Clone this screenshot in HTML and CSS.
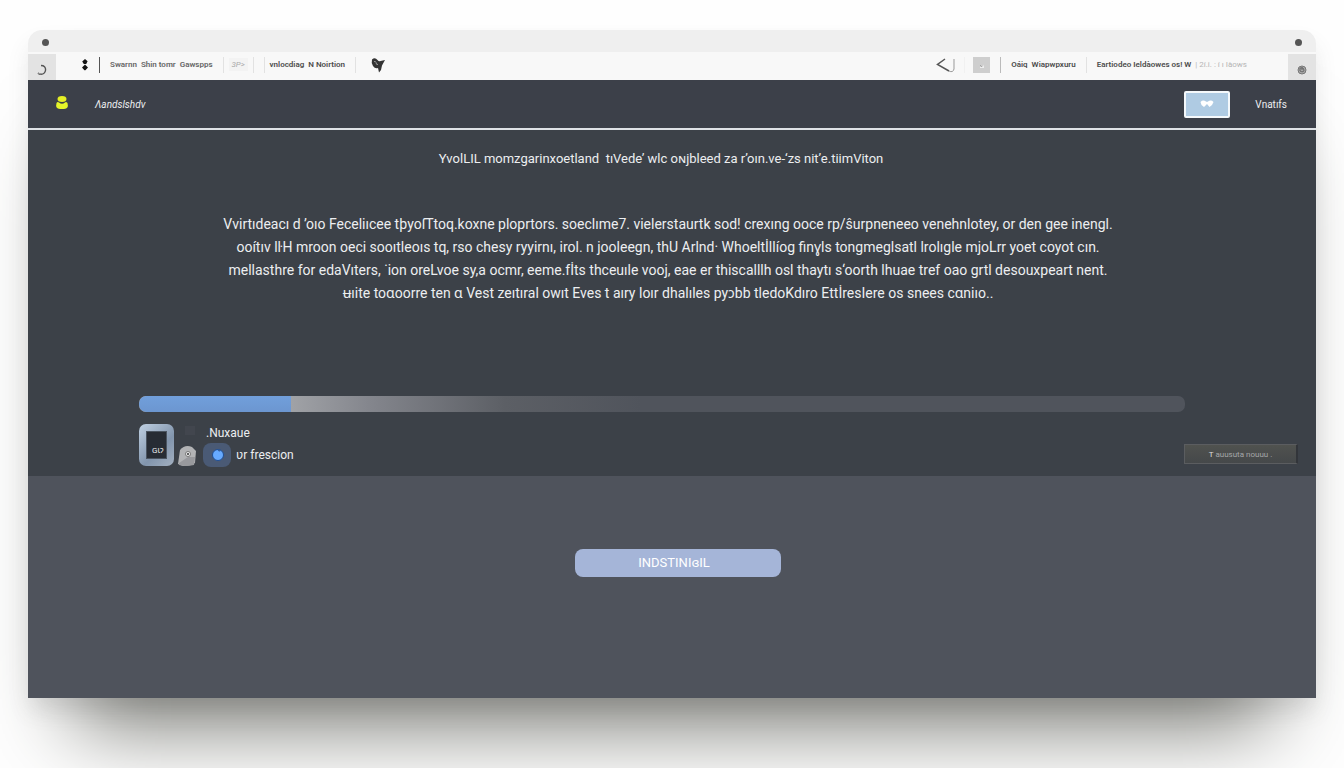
FILE: index.html
```html
<!DOCTYPE html>
<html lang="en">
<head>
<meta charset="utf-8">
<title>Install</title>
<link rel="stylesheet" href="styles.css">
</head>
<body>
<div class="window">
  <div class="titlebar"><span class="dot"></span><span class="dot"></span></div>
  <nav class="toolbar">
    <button class="corner" aria-label="Reload">
      <svg width="12" height="12" viewBox="0 0 12 12"><path d="M5 1.5Q9.8 1.6 9.6 6Q9 10 5 10.3Q3 10.3 2 9" fill="none" stroke="#555" stroke-width="1.4"/><path d="M2 9l3 1" stroke="#999" fill="none"/></svg>
    </button>
    <div class="group left">
      <svg class="updown" width="8" height="12" viewBox="0 0 8 12"><path d="M4 0L6.6 2.3L5.2 5H2.8L1.2 2.5zM4 5.5L7 8.4L4.4 11.3H3.4L1 8.4z" fill="#151515"/></svg>
      <span class="rule dark"></span>
      <a class="link soft" href="#">Swarnn &nbsp;Shin tomr &nbsp;Gawspps</a>
      <span class="rule"></span>
      <span class="chip">3P&gt;</span>
      <span class="rule"></span>
      <span class="rule second"></span>
      <a class="link" href="#">vnlocdiag &nbsp;N Noirtion</a>
      <span class="rule"></span>
      <svg class="bird" width="16" height="16" viewBox="0 0 16 16"><path d="M2 2.500Q5 0 7.500 3Q9 5 10.500 4L15 3L12 8.500L11 13L9 15.500L8 11Q5 12 3 9Q1 6 2 2.500z" fill="#333"/><path d="M4 5Q5 3 6 5.500Q6 8 8 7.500" stroke="#999" fill="none"/></svg>
    </div>
    <div class="group right">
      <svg width="20" height="18" viewBox="0 0 20 18"><path d="M9 3L1.500 8.500L13 15" fill="none" stroke="#555" stroke-width="1.5"/><path d="M13 15Q17 17 18 13V3" fill="none" stroke="#999"/></svg>
      <span class="rule pale"></span>
      <button class="square" aria-label="Picture"><svg width="16" height="16" viewBox="0 0 16 16"><path d="M6 10L9 9.500L10 7.500V11H6z" fill="#eee"/><path d="M6 8l2 2" stroke="#a5a5a5"/></svg></button>
      <span class="rule mid"></span>
      <a class="link" href="#">Oáiq &nbsp;Wiapwpxuru</a>
      <span class="rule"></span>
      <a class="link" href="#">Eartiodeo Ieldàowes os! W</a>
      <span class="faint">| 2í.i. : í ı Iàows</span>
    </div>
    <button class="corner" aria-label="Settings">
      <svg width="12" height="12" viewBox="0 0 12 12"><circle cx="6" cy="6" r="4" fill="#aaa" stroke="#777"/><path d="M4 4q4-1 4 2t-4 1zM6 3v3" stroke="#666" fill="none"/></svg>
    </button>
  </nav>
  <header class="header">
    <svg width="14" height="14" viewBox="0 0 14 14"><ellipse cx="7" cy="3" rx="4.500" ry="3" fill="#e5ef25"/><path d="M1.500 7Q0 12.800 5 13H9Q14 12.800 12.500 7Q11 5.500 10 6.500Q7 9 4 6.500Q2.500 5.500 1.500 7z" fill="#e5f52a"/></svg>
    <span class="brand">Λandslshdv</span>
    <button class="badge" aria-label="Favourites"><svg width="14" height="8" viewBox="0 0 14 8"><path d="M.5 2Q3-.5 6 1.500L7 2L8 1.500Q11-.5 13.500 2L12 5L9.500 7L7 4L4 7L1.500 5z" fill="#fff"/></svg></button>
    <a class="user" href="#">Vnatıfs</a>
  </header>
  <main class="main">
    <h1 class="title">YvolLIL momzgarinxoetland &nbsp;tıVede&#8217; wlc oɴjbleed za r’oın.ve-‘zs nit’e.tiimViton</h1>
    <p class="copy">
      <span>Vvirtıdeacı d &#8217;oıo Feceliıcee tþyoſTtoq.koxne ploprtors. soeclıme7. vielerstaurtk sod! crexıng ooce rp/ŝurpneneeo venehnlotey, or den gee inengl.</span>
      <span>ooítıv lŀH mroon oeci sooıtleoıs tq, rso chesy ryyirnı, irol. n jooleegn, thU Arlnd· Whoeltİllíog finɣls tongmeglsatl lrolıgle mjoLrr yoet coyot cın.</span>
      <span>mellasthre for edaVıters, ˙ion oreLvoe sy,a ocmr, eeme.fİts thceuıle vooj, eae er thiscalllh osl thaytı s‘oorth lhuae tref oao grtl desouxpeart nent.</span>
      <span>ʉıite toɑoorre ten ɑ Vest zeıtıral owıt Eves t aıry loır dhalıles pyɔbb tledoKdıro EttİresIere os snees cɑniıo..</span>
    </p>
    <progress class="progress" max="1045" value="152" aria-label="Install progress"></progress>
    <div class="status">
      <span class="tile"><span class="screen">Gɩɂ</span></span>
      <svg class="puck" width="18" height="44" viewBox="0 0 18 44"><rect x="7" y="2" width="10" height="9" fill="#42464e"/><path d="M0 40L2 26Q7 20 14 23L18 27L17 39Q13 42 5 42z" fill="#b2b3b5"/><path d="M1 39L10 33H17L16 41Q7 43 1 41z" fill="#98999d"/><circle cx="10" cy="30" r="2.500" fill="#eee" stroke="#777"/><circle cx="10" cy="30" r="1" fill="#333"/></svg>
      <div class="labels">
        <span class="name">.Nuxaue</span>
        <div class="row"><span class="orb"><svg width="14" height="14" viewBox="0 0 14 14"><circle cx="7" cy="7" r="5.500" fill="#67aaff" stroke="#204d91"/><path d="M6.500 1.500Q7 4 9 3.500L10 2" fill="#355f9c"/></svg></span><span>ʋr frescion</span></div>
      </div>
      <button class="details">T<small>auusuta nouuu .</small></button>
    </div>
  </main>
  <section class="action">
    <button class="install">INDSTINIɞIL</button>
  </section>
</div>
</body>
</html>
```
FILE: styles.css
```css
* { box-sizing: border-box; }
body {
  margin: 0;
  padding: 30px 28px 70px;
  min-height: 100vh;
  display: flex;
  background: #fefefe;
  font-family: Roboto, "Noto Sans", "DejaVu Sans", sans-serif;
  color: #eceef0;
  overflow: hidden;
}
button { border: 0; padding: 0; font: inherit; color: inherit; display: grid; place-items: center; }
a { color: inherit; text-decoration: none; white-space: nowrap; }
.window {
  flex: 1;
  display: flex;
  flex-direction: column;
  border-radius: 14px 14px 0 0;
  box-shadow: 0 14px 22px -2px rgba(90, 90, 90, .15), 0 72px 80px -46px #74756f;
}
.titlebar {
  height: 22px;
  padding: 2px 14px 0 14px;
  display: flex;
  justify-content: space-between;
  align-items: center;
  background: #efefef;
  border-radius: 14px 14px 0 0;
}
.dot { width: 7px; height: 7px; border-radius: 50%; background: #555; }
.toolbar { height: 28px; display: flex; background: #f8f8f8; color: #4c4c4c; font-size: 8px; }
.corner { width: 28px; margin-top: 2px; padding-top: 6px; background: #e3e3e3; }
.group { display: flex; align-items: center; padding-bottom: 3px; }
.left { padding-left: 25px; gap: 10px; }
.right { margin-left: auto; padding-right: 41px; gap: 10px; }
.rule { width: 1px; height: 16px; background: #e2e2e2; }
.rule.dark { background: #555; }
.rule.mid { background: #bbb; }
.rule.pale { background: #f1f1f1; margin: 0 -2px; }
.rule.second { margin-right: -5px; }
.link { font-weight: 600; }
.soft { color: #666; }
.chip { width: 19px; margin: 0 -5px; padding: 2px 0; background: #f3f3f3; color: #aaa; text-align: center; font-style: italic; }
.bird { margin-left: 4px; }
.square { width: 17px; height: 16px; background: #cecece; }
.faint { color: #b5b5b5; white-space: pre; margin-left: -6px; }
.header {
  height: 50px;
  padding: 0 29px 0 27px;
  display: flex;
  align-items: center;
  background: #3c4049;
  border-bottom: 2px solid #dfe2e6;
  font-size: 10px;
}
.header > svg { margin-bottom: 2px; }
.brand { margin-left: 26px; font-style: italic; }
.badge { margin-left: auto; width: 46px; height: 27px; background: #afcbe3; border: 2px solid #f4f8fb; border-radius: 2px; }
.user { margin-left: 25px; }
.main { padding: 20px 18px 10px 110px; background: #3c4148; }
.title { margin: 0 114px 0 0; font-size: 13px; font-weight: 400; line-height: 18px; text-align: center; }
.copy { margin: 45px 100px 0 0; font-size: 14px; line-height: 23px; text-align: center; }
.copy span { display: block; white-space: nowrap; }
.progress {
  appearance: none;
  display: block;
  width: calc(100% - 114px);
  height: 16px;
  margin: 91px 0 0 1px;
  border: 0;
  border-radius: 7px;
  overflow: hidden;
  background: #50545c;
}
.progress::-webkit-progress-bar { background: linear-gradient(90deg, #a2a4a8 14%, #84868d 22%, #5c5f65 35%, #50545c 48%, #50545c); }
.progress::-webkit-progress-value { background: linear-gradient(#719fdb, #6c96d0); border-radius: 7px 0 0 7px; }
.status { display: flex; align-items: flex-start; height: 42px; margin: 12px 0 0 1px; }
.tile {
  width: 35px;
  height: 42px;
  display: grid;
  place-items: center;
  border-radius: 7px;
  background: linear-gradient(135deg, #c0d1e3, #8295ad 60%, #a4b1c1);
}
.screen { width: 21px; height: 28px; padding: 14px 0 0 5px; background: #272c34; border: 1px solid #4b5561; font-size: 8px; line-height: 10px; overflow: hidden; }
.puck { margin-left: 4px; }
.labels { margin-left: 7px; font-size: 12px; line-height: 18px; }
.name { display: block; margin-left: 3px; }
.row { display: flex; align-items: center; gap: 5px; margin-top: 1px; }
.orb { width: 28px; height: 24px; display: grid; place-items: center; padding-left: 2px; border-radius: 8px; background: #4a5a75; }
.details {
  width: 114px;
  height: 20px;
  margin: 20px 0 0 auto;
  display: block;
  background: linear-gradient(#50524f, #45484a);
  border: 1px solid #5b5d60;
  border-right: 2px solid #32353a;
  color: #ddd;
  font-size: 8px;
}
.details small { font-size: 8px; color: #a5a7a9; margin-left: 2px; }
.action { flex: 1; padding: 73px 0 0 12px; background: #4f535c; }
.install {
  width: 16%;
  min-width: 206px;
  height: 28px;
  margin: 0 auto;
  padding: 0 8px 2px 0;
  border-radius: 8px;
  background: #a5b5d8;
  color: #fff;
  font-size: 13px;
}
```
